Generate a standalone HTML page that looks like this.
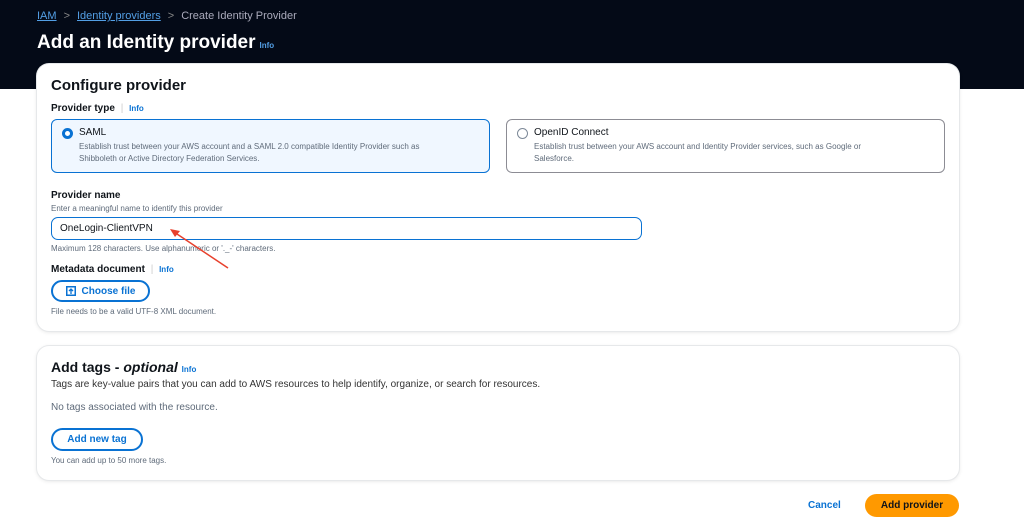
<!DOCTYPE html>
<html><head><meta charset="utf-8"><style>
*{box-sizing:border-box;margin:0;padding:0}
body{width:1024px;height:524px;background:#fff;font-family:"Liberation Sans",sans-serif;position:relative;overflow:hidden;color:#0f141a}
.hdr{position:absolute;left:0;top:0;width:1024px;height:89px;background:#040a17}
.abs{position:absolute;white-space:nowrap}
.crumb{top:10px;left:37px;font-size:11px;color:#aab}
.crumb a{color:#539fe5;text-decoration:underline}
.crumb .sep{color:#888;margin:0 7px}
h1{position:absolute;top:32px;left:37px;font-size:19px;font-weight:bold;color:#fff}
.info{color:#0972d3;font-size:8px;font-weight:bold}
h1 .info{color:#539fe5;margin-left:4px}
.card{position:absolute;left:37px;width:922px;background:#fff;border-radius:12px;box-shadow:0 0 0 1px #e6e8ea,0 1px 4px rgba(0,0,0,.12)}
.lbl{font-size:10px;font-weight:bold}
.sm{font-size:8px;color:#5f6b7a}
.radio{position:absolute;top:55px;height:54px;border-radius:6px}
.dot{position:absolute;left:10px;top:8px;width:11px;height:11px;border-radius:50%}
.btn{position:absolute;border:2px solid #0972d3;border-radius:14px;color:#0972d3;font-size:10px;font-weight:bold;text-align:center}
</style></head><body>
<div class="hdr"></div>
<div class="abs crumb"><a>IAM</a><span class="sep">&gt;</span><a>Identity providers</a><span class="sep">&gt;</span>Create Identity Provider</div>
<h1>Add an Identity provider<span class="info">Info</span></h1>

<div class="card" style="top:64px;height:267px">
 <div class="abs" style="left:14px;top:13px;font-size:15px;font-weight:bold">Configure provider</div>
 <div class="abs lbl" style="left:14px;top:39px">Provider type <span style="color:#ccc;font-weight:normal;margin:0 3px">|</span> <span class="info">Info</span></div>
 <div class="radio" style="left:14px;width:439px;background:#f0f7ff;border:1.5px solid #0972d3">
  <div class="dot" style="border:3.5px solid #0972d3;background:#fff"></div>
  <div class="abs lbl" style="left:27px;top:7px;font-weight:normal">SAML</div>
  <div class="abs sm" style="left:27px;top:21px;line-height:12px">Establish trust between your AWS account and a SAML 2.0 compatible Identity Provider such as<br>Shibboleth or Active Directory Federation Services.</div>
 </div>
 <div class="radio" style="left:469px;width:439px;border:1.5px solid #8c8c94">
  <div class="dot" style="border:1.5px solid #7d8998;background:#fff"></div>
  <div class="abs lbl" style="left:27px;top:7px;font-weight:normal">OpenID Connect</div>
  <div class="abs sm" style="left:27px;top:21px;line-height:12px">Establish trust between your AWS account and Identity Provider services, such as Google or<br>Salesforce.</div>
 </div>
 <div class="abs lbl" style="left:14px;top:126px">Provider name</div>
 <div class="abs sm" style="left:14px;top:140px">Enter a meaningful name to identify this provider</div>
 <div class="abs" style="left:14px;top:153px;width:591px;height:23px;border:1.5px solid #0972d3;border-radius:7px;font-size:10px;padding:5px 8px">OneLogin-ClientVPN</div>
 <div class="abs sm" style="left:14px;top:180px">Maximum 128 characters. Use alphanumeric or '._-' characters.</div>
 <div class="abs lbl" style="left:14px;top:200px">Metadata document <span style="color:#ccc;font-weight:normal;margin:0 3px">|</span> <span class="info">Info</span></div>
 <div class="btn" style="left:14px;top:216px;width:99px;height:22px;display:flex;align-items:center;justify-content:center;gap:6px"><svg width="10" height="10" viewBox="0 0 10 10"><rect x="0.75" y="0.75" width="8.5" height="8.5" fill="none" stroke="#0972d3" stroke-width="1.5"/><path d="M5 8V3M3 5l2-2 2 2" fill="none" stroke="#0972d3" stroke-width="1.3"/></svg><span>Choose file</span></div>
 <div class="abs sm" style="left:14px;top:243px">File needs to be a valid UTF-8 XML document.</div>
</div>

<svg class="abs" style="left:160px;top:220px" width="80" height="55"><line x1="68" y1="48" x2="14" y2="12" stroke="#e8402c" stroke-width="1.5"/><polygon points="10,9 20,11 15,17" fill="#e8402c"/></svg>

<div class="card" style="top:346px;height:134px">
 <div class="abs" style="left:14px;top:13px;font-size:14px;font-weight:bold">Add tags - <i>optional</i> <span class="info">Info</span></div>
 <div class="abs" style="left:14px;top:33px;font-size:10px;color:#333">Tags are key-value pairs that you can add to AWS resources to help identify, organize, or search for resources.</div>
 <div class="abs" style="left:14px;top:56px;font-size:10px;color:#5f6b7a">No tags associated with the resource.</div>
 <div class="btn" style="left:14px;top:82px;width:92px;height:23px;padding-top:4px">Add new tag</div>
 <div class="abs sm" style="left:14px;top:110px">You can add up to 50 more tags.</div>
</div>

<div class="abs" style="left:808px;top:500px;font-size:10px;font-weight:bold;color:#0972d3">Cancel</div>
<div class="abs" style="left:865px;top:494px;width:94px;height:23px;background:#ff9900;border-radius:12px;font-size:10px;font-weight:bold;text-align:center;line-height:23px">Add provider</div>
</body></html>
